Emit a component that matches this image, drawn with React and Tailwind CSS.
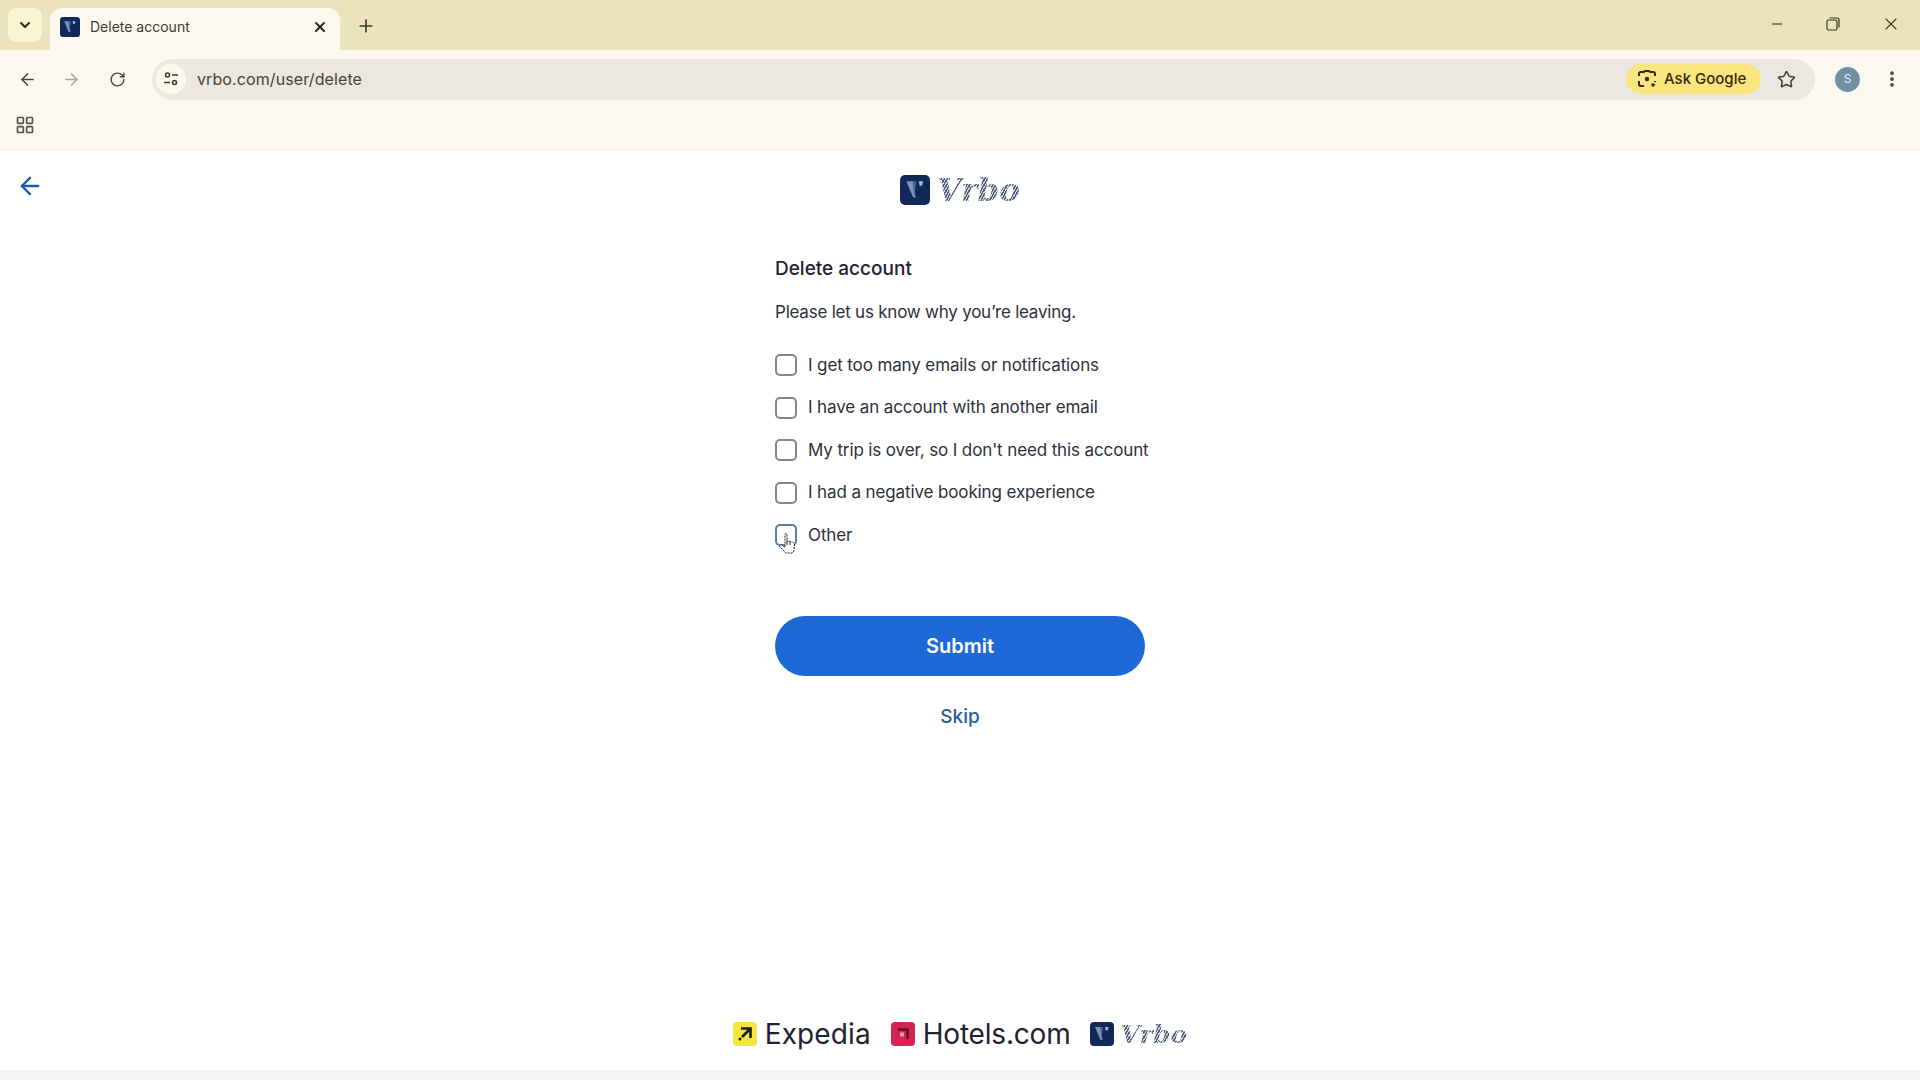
import React from 'react';
import { ArrowLeft, ArrowRight, RotateCw, Star, X, Plus, ChevronDown, LayoutGrid, Minus, EllipsisVertical } from 'lucide-react';

const reasons = [
  "I get too many emails or notifications",
  "I have an account with another email",
  "My trip is over, so I don't need this account",
  "I had a negative booking experience",
  "Other",
];

const VrboMark = ({ size }) => (
  <svg width={size} height={size} viewBox="0 0 24 24">
    <rect width="24" height="24" rx="4" fill="#12275a" />
    <path d="M5 5h6l1.500 13h-2L5 5z" fill="#7f93b8" />
    <path d="M10 5h3l-1.500 12z" fill="#4e6591" />
    <path d="M15 5h3.500l-.8 3.500h-2z" fill="#a9b6cf" />
  </svg>
);

const VrboWord = ({ className }) => (
  <span
    className={`font-['DejaVu_Serif',serif] font-bold italic text-transparent bg-clip-text bg-[repeating-linear-gradient(120deg,#55617c_0px,#55617c_1.500px,#d5d9e2_1.500px,#d5d9e2_2.500px)] ${className}`}
  >
    Vrbo
  </span>
);

const TitleBar = () => (
  <div className="h-[50px] bg-[#eae3bb] flex items-end pl-2">
    <div className="w-[34px] h-[34px] mb-2 rounded-lg bg-[#f9f3d2] flex items-center justify-center">
      <ChevronDown size={16} strokeWidth={3} className="text-[#2c2a1e]" />
    </div>
    <div className="ml-2 w-[290px] h-[42px] bg-[#fdf8ed] rounded-t-xl flex items-center pl-[10px] pr-3 pb-1">
      <VrboMark size={20} />
      <span className="ml-[10px] text-sm text-[#3f3d36]">Delete account</span>
      <X size={16} strokeWidth={3} className="ml-auto text-[#2c2a1e]" />
    </div>
    <Plus size={20} strokeWidth={2} className="ml-4 mb-[14px] text-[#3f3a26]" />
    <div className="ml-auto h-full flex items-center pb-[2px] text-[#3a3524]">
      <Minus size={16} strokeWidth={2} className="mr-[41px] text-[#6b6243]" />
      <svg width="14" height="14" viewBox="0 0 14 14" fill="none" stroke="currentColor" strokeWidth="1.200" className="mr-[41px]">
        <rect x="1" y="3" width="10" height="10" rx="1.500" />
        <path d="M3.500 1h8A1.500 1.500 0 0 1 13 2.500v8" />
      </svg>
      <X size={20} strokeWidth={1.300} className="mr-[19px]" />
    </div>
  </div>
);

const Toolbar = () => (
  <div className="h-[58px] bg-[#fdf8ed] flex items-center pl-[18px] pr-[18px]">
    <ArrowLeft size={19} className="text-[#4a4740]" />
    <ArrowRight size={19} className="ml-[25px] text-[#aaa79e]" />
    <RotateCw size={17} className="ml-[28px] text-[#4a4740]" />
    <div className="ml-[26px] flex-1 h-[41px] rounded-full bg-[#ece7e0] flex items-center pl-[4px] pr-[19px]">
      <div className="w-[30px] h-[30px] rounded-full bg-[#fdf8ed] flex items-center justify-center">
        <svg width="16" height="16" viewBox="0 0 16 16" fill="none" stroke="#3a3524" strokeWidth="1.500">
          <circle cx="4.500" cy="4" r="2" />
          <path d="M9 4h6M1 11.500h6" />
          <circle cx="11.500" cy="11.500" r="2" />
        </svg>
      </div>
      <span className="ml-[11px] text-base tracking-[0.1px] text-[#45433d]">vrbo.com/user/delete</span>
      <div className="ml-auto h-[30px] w-[135px] rounded-full bg-[#fbe57f] flex items-center pl-3">
        <svg width="18" height="18" viewBox="0 0 18 18" fill="none" stroke="#33290c" strokeWidth="2">
          <path d="M1 6V4a2 2 0 0 1 2-2h3l1-1h4l1 1h3a2 2 0 0 1 2 2v2M1 11v3a2 2 0 0 0 2 2h3M17 11v1" />
          <circle cx="9" cy="9" r="2.200" fill="#33290c" stroke="none" />
          <circle cx="15" cy="15" r="1.800" fill="#33290c" stroke="none" />
        </svg>
        <span className="ml-2 text-[15px] font-medium text-[#33290c]">Ask Google</span>
      </div>
      <Star size={19} strokeWidth={2} className="ml-4 text-[#48433f]" />
    </div>
    <div className="ml-5 w-[25px] h-[25px] rounded-full bg-[#7390a3] flex items-center justify-center text-xs text-[#e6eff5]">S</div>
    <EllipsisVertical size={20} strokeWidth={2.500} className="ml-[22px] text-[#47433a]" />
  </div>
);

const BookmarksBar = () => (
  <div className="h-[42px] pb-[7px] bg-[#fdf8ed] border-b border-[#ecebe4] flex items-center pl-[15px]">
    <LayoutGrid size={20} strokeWidth={2} className="text-[#54514a]" />
  </div>
);

const Reason = ({ label, focused }) => (
  <label className="h-[42.500px] flex items-center">
    <span className={`relative shrink-0 w-[22px] h-[22px] rounded-[5px] border-2 bg-white ${focused ? 'border-[#5b7f9e]' : 'border-[#858585]'}`}>
      {focused && (
        <svg width="20" height="24" viewBox="0 0 20 24" className="absolute left-[1px] top-[6px]" fill="#fff" stroke="#1b1b1b" strokeWidth="1">
          <path d="M7 2.500c0-1.500 2-1.500 2 0V9l5 1c2 .5 2.500 1 2.500 3l-.5 5c-.3 2-1 3-3 3H9c-2 0-2.500-1-3.500-2.500L2 15c-1-1.500.5-3 2-2l3 2.500z" strokeDasharray="2 1" />
          <path d="M9 9v4M12 10v3" fill="none" />
        </svg>
      )}
    </span>
    <span className="ml-[11px] whitespace-nowrap text-[17px] text-[#2e303a] tracking-[-0.12px]">{label}</span>
  </label>
);

const Footer = () => (
  <div className="mt-auto h-[60px] pb-3 flex items-center justify-center text-[#1f2230]">
    <span className="w-6 h-6 rounded-[4px] bg-[#f4e63f] flex items-center justify-center">
      <svg width="16" height="16" viewBox="0 0 16 16" fill="none" stroke="#1c1c18" strokeWidth="2.600">
        <path d="M4 2.500h9.500V12M13 3 5 11" />
        <circle cx="3" cy="13" r="1.500" fill="#1c1c18" stroke="none" />
      </svg>
    </span>
    <span className="ml-2 text-[28px] tracking-[0.1px]">Expedia</span>
    <span className="ml-[20px] w-6 h-6 rounded-[4px] bg-[#d32454] flex items-center justify-center">
      <svg width="14" height="14" viewBox="0 0 14 14" fill="none" stroke="#3b0a1c" strokeWidth="2">
        <path d="M2 2.500h9.500V12" />
        <rect x="4" y="5.500" width="4" height="4" fill="#f59ab2" stroke="none" />
      </svg>
    </span>
    <span className="ml-2 text-[28px] tracking-[-0.2px]">Hotels.com</span>
    <span className="ml-5"><VrboMark size={24} /></span>
    <VrboWord className="ml-[6px] text-[25px] leading-none" />
  </div>
);

export default function App() {
  return (
    <div className="w-full h-[1080px] flex flex-col bg-white overflow-hidden font-['Inter',sans-serif]">
      <TitleBar />
      <Toolbar />
      <BookmarksBar />
      <main className="relative flex-1 flex flex-col">
        <ArrowLeft size={28} strokeWidth={2} className="absolute left-4 top-[22px] text-[#1f5aa8]" />
        <div className="mt-[25px] h-[30px] flex items-center justify-center">
          <VrboMark size={30} />
          <VrboWord className="ml-[7px] text-[31px] leading-none" />
        </div>
        <section className="mt-[49px] mx-auto w-[370px]">
          <h1 className="h-[30px] flex items-center text-[19px] font-medium text-[#1f2230]">Delete account</h1>
          <p className="mt-[14px] h-[30px] flex items-center text-[17px] text-[#2e303a] tracking-[-0.23px]">Please let us know why you’re leaving.</p>
          <div className="mt-[16px] flex flex-col">
            {reasons.map((r) => (
              <Reason key={r} label={r} focused={r === 'Other'} />
            ))}
          </div>
          <button className="mt-[59px] w-full h-[60px] rounded-full bg-[#1f69d6] text-white text-xl font-semibold">Submit</button>
          <div className="mt-[27px] text-center text-[19px] font-medium text-[#2a5c9c]">Skip</div>
        </section>
        <Footer />
        <div className="h-[10px] bg-[#f3f3f2]" />
      </main>
    </div>
  );
}
